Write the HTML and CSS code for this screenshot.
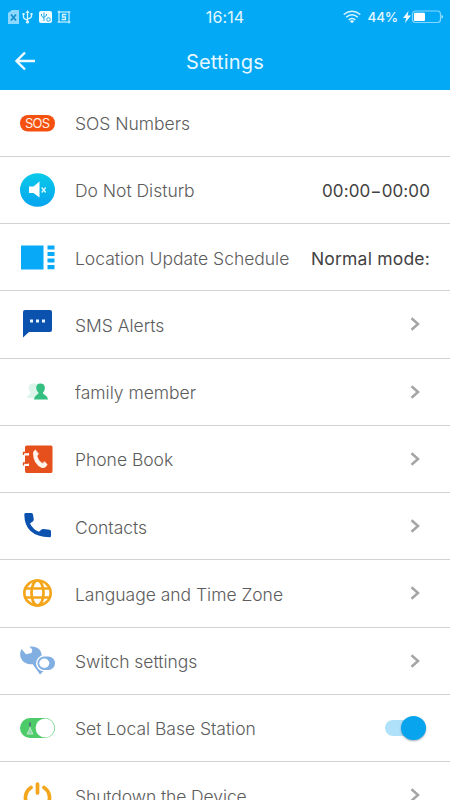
FILE: index.html
```html
<!DOCTYPE html>
<html lang="en">
<head>
<meta charset="utf-8">
<title>Settings</title>
<link rel="stylesheet" href="styles.css">
</head>
<body>
<header class="top">
  <div class="status">
    <svg class="status-left" width="64" height="16" viewBox="0 0 64 16">
      <path d="M0 4l4-3h7v14H0z" fill="#8cd8ff"/><path d="M3 5.500l5 6M8 5.500l-5 6" stroke="#168fce" stroke-width="1.800"/>
      <g stroke="#d8f5ff" fill="none" stroke-width="1.300"><path d="M19.500 3v10M15.500 5v3q0 2 4 3M23.500 5v2q0 2-4 3"/></g>
      <path d="M19.500 1l2 3h-4zM14.500 4h2v2h-2zM22.500 4h2v2h-2z" fill="#d8f5ff"/><circle cx="19.500" cy="13" r="1.600" fill="#d8f5ff"/>
      <rect x="31" y="2" width="13" height="12" rx="2" fill="#effcff"/>
      <path d="M36 3.500v8.500M33.500 5v2l2.500 2M38.500 5v1.500L36 8" stroke="#20a9e7" fill="none"/><circle cx="40.500" cy="10.500" r="1.800" stroke="#20a9e7" fill="none"/>
      <rect x="51" y="3" width="10" height="10" fill="none" stroke="#c9f2ff" stroke-width="1.200"/><path d="M49.500 3h2M51 1.500v2M60.500 13h2M61 12.500v2M49.500 13h2M60.500 3h2" stroke="#c9f2ff"/>
      <path d="M58.500 5.500h-4V8h3v2.500h-4" fill="none" stroke="#d8f5ff" stroke-width="1.300"/>
    </svg>
    <span class="time">16:14</span>
    <div class="status-right">
      <svg width="18" height="14" viewBox="0 0 18 14"><g fill="none" stroke="#dcf6ff" stroke-width="1.500"><path d="M.7 4.500q8.300-6.600 16.600 0M3.200 7.200q5.800-4.700 11.600 0M5.700 9.800q3.300-2.700 6.600 0"/></g><path d="M6.700 11q2.300-1.600 4.600 0L9 13.200z" fill="#dcf6ff"/></svg>
      <span class="percent">44%</span>
      <svg class="battery" width="40" height="14" viewBox="0 0 40 14"><path d="M5.500 1L0 8h3.200L2 13l6-7.500H4.700z" fill="#eefbff"/><rect x="9.500" y="1" width="28" height="11.500" rx="3" fill="none" stroke="#85d7ff" stroke-width="1.200"/><rect x="11" y="2.700" width="11" height="8.200" rx="1" fill="#fff"/><path d="M38.500 5q1.500 0 1.500 1.800t-1.500 1.800z" fill="#b6e8ff"/></svg>
    </div>
  </div>
  <div class="bar">
    <svg class="back" width="20" height="20" viewBox="0 0 20 20"><path d="M10 1.500L1.500 10l8.500 8.500M1.500 10H20" fill="none" stroke="#effbff" stroke-width="2.400"/></svg>
    <h1 class="title">Settings</h1>
  </div>
</header>
<main class="list">
  <div class="row">
    <svg class="icon" viewBox="0 0 36 36"><rect x="0" y="9" width="35" height="16.500" rx="8" fill="#f4500f"/><text class="sos" x="17.500" y="21.800" textLength="25" text-anchor="middle">SOS</text></svg>
    <span class="label">SOS Numbers</span>
  </div>
  <div class="row">
    <svg class="icon" viewBox="0 0 36 36"><defs><linearGradient id="sky" x1="0" y1="0" x2="0" y2="1"><stop stop-color="#08cae9"/><stop offset="1" stop-color="#07a4ef"/></linearGradient></defs><ellipse cx="17.500" cy="17" rx="17.500" ry="16.800" fill="url(#sky)"/><path d="M9 13.500h4.500l6-5v16l-6-4.500H9z" fill="#fff"/><path d="M21.700 14.500l4 5M25.700 14.500l-4 5" stroke="#d8f7ff" stroke-width="1.400"/></svg>
    <span class="label">Do Not Disturb</span><span class="value hours">00:00−00:00</span>
  </div>
  <div class="row">
    <svg class="icon" viewBox="0 0 36 36"><path d="M1 5.500h22.500v24H1zM27.500 5.500h7v4h-7zM27.500 12h7v4h-7zM27.500 18.500h7v4h-7zM27.500 25h7v4.300h-7z" fill="#08aaf7"/></svg>
    <span class="label">Location Update Schedule</span><span class="value mode">Normal mode:</span>
  </div>
  <div class="row">
    <svg class="icon" viewBox="0 0 36 36"><path d="M5 3h25q2 0 2 2v18q0 2-2 2H9l-6 5.500V5q0-2 2-2z" fill="#0b52ae"/><path d="M10 12.500h3v3h-3zM16 12.500h3v3h-3zM22 12.500h3v3h-3z" fill="#e8f4ff"/></svg>
    <span class="label">SMS Alerts</span><svg class="chevron" viewBox="0 0 10 16"><path d="M1.500 2.300L8 8l-6.500 5.700"/></svg>
  </div>
  <div class="row">
    <svg class="icon" viewBox="0 0 36 36"><path d="M13 8.500c-6 0-4.500 7-2.500 8.500 0 3-3 2-3.500 6h14V9z" fill="#dcf4e9"/><path d="M20.500 8.500c5.500 0 5.300 6.500 2.500 9-.3 3 4 1.500 5 7H14c1-5.500 4.500-4 4.500-7-3-2.500-3.500-9 2-9z" fill="#34bf80"/></svg>
    <span class="label">family member</span><svg class="chevron" viewBox="0 0 10 16"><path d="M1.500 2.300L8 8l-6.500 5.700"/></svg>
  </div>
  <div class="row">
    <svg class="icon" viewBox="0 0 36 36"><path d="M7 3.500h24q1.500 0 1.500 1.500v24q0 2-1.500 2H6.500q-1.500 0-1.500-2V5q0-1.500 2-1.500z" fill="#e5501c"/><path d="M4 11h5v2.500H4zM4 21.500h5V24H4z" fill="#fff"/><path d="M3.500 13v-2.500H8M3.500 23.500V21H8" fill="none" stroke="#e5501c" stroke-width="1.300"/><path d="M13 11q0-2 2.500-3.500l3.500 4-1.700 2.500q1 4.500 4.700 7l2.500-1.800 3 3.300q-2 4-5.500 3.500Q13 22 13 11z" fill="#fff5ed"/><path d="M16 8.500l3 4M22.500 21.500l3-2.500" stroke="#e99877" stroke-width=".8"/></svg>
    <span class="label">Phone Book</span><svg class="chevron" viewBox="0 0 10 16"><path d="M1.500 2.300L8 8l-6.500 5.700"/></svg>
  </div>
  <div class="row">
    <svg class="icon" viewBox="0 0 36 36"><path d="M5.500 4h6q1.300 0 1.500 1.500l.8 5q0 1-.8 1.700L10 14.500q3 6 9 8.300l2.500-2.300q.8-.6 2-.5l6 .7q1.500.3 1.500 1.800V27q0 1.300-1.500 1.300Q4.500 27.500 4.300 5.500 4.300 4 5.500 4z" fill="#0b52ae"/></svg>
    <span class="label">Contacts</span><svg class="chevron" viewBox="0 0 10 16"><path d="M1.500 2.300L8 8l-6.500 5.700"/></svg>
  </div>
  <div class="row">
    <svg class="icon" viewBox="0 0 36 36"><g fill="none" stroke="#f3a51b" stroke-width="2.700"><ellipse cx="17.500" cy="17" rx="13.200" ry="12.500"/><ellipse cx="17.500" cy="17" rx="6" ry="12.500"/><path d="M6 12.500h23M6 21.500h23"/></g></svg>
    <span class="label">Language and Time Zone</span><svg class="chevron" viewBox="0 0 10 16"><path d="M1.500 2.300L8 8l-6.500 5.700"/></svg>
  </div>
  <div class="row">
    <svg class="icon" viewBox="0 0 36 36"><path d="M9.300 2.500Q18 2 20.800 7.500q1.500 3 .2 6l6.500 8-4 5.500-3.500 3.500-7.500-10.500q-6 1-10-3.200Q-1.700 11 1.500 5L6 10.300l5.500-1.300.8-3.500z" fill="#82afe2"/><rect x="16" y="11.300" width="20.500" height="16" rx="8" fill="#fff"/><rect x="17.500" y="12.500" width="17.500" height="13.500" rx="6.700" fill="#82afe2"/><ellipse cx="24.300" cy="19.300" rx="5" ry="4.700" fill="#fff"/></svg>
    <span class="label">Switch settings</span><svg class="chevron" viewBox="0 0 10 16"><path d="M1.500 2.300L8 8l-6.500 5.700"/></svg>
  </div>
  <div class="row">
    <svg class="icon" viewBox="0 0 36 36"><rect x="0" y="7" width="35" height="20" rx="10" fill="#4ccb68"/><circle cx="25" cy="17" r="9.400" fill="#fff"/><path d="M10 12v5l-3 6h6l-3-6" fill="#91d7ab" stroke="#b9e8c8"/><path d="M10 11.500v4" stroke="#415b70" stroke-width="1.500"/></svg>
    <span class="label">Set Local Base Station</span><span class="switch"><span class="knob"></span></span>
  </div>
  <div class="row">
    <svg class="icon" viewBox="0 0 36 36"><path d="M11 9.500a12 12 0 1 0 13 0M17.500 6v9" fill="none" stroke="#f3a51b" stroke-width="3.700" stroke-linecap="round"/></svg>
    <span class="label last">Shutdown the Device</span><svg class="chevron" viewBox="0 0 10 16"><path d="M1.500 2.300L8 8l-6.500 5.700"/></svg>
  </div>
</main>
</body>
</html>
```
FILE: styles.css
```css
* { box-sizing: border-box; }
html, body { height: 100%; }
body {
  margin: 0;
  overflow: hidden;
  background: #fff;
  font-family: Inter, "Liberation Sans", sans-serif;
}
.top { height: 89.500px; background: #04a9f6; color: #e6f8ff; }
.status {
  display: grid;
  grid-template-columns: 1fr auto 1fr;
  align-items: center;
  height: 33px;
  padding: 0 7px 0 8px;
}
.time { font-size: 16px; letter-spacing: .1px; line-height: 20px; margin: 1px 1px 0 0; }
.status-right { display: flex; align-items: center; justify-content: flex-end; }
.percent { margin: 1px 5px 0 6px; font-size: 13.500px; font-weight: 500; letter-spacing: -.2px; }
.bar {
  display: grid;
  grid-template-columns: 1fr auto 1fr;
  align-items: center;
  height: 56px;
  padding: 0 15px;
}
.title { margin: 2px 0 0; font-size: 20px; font-weight: 400; letter-spacing: .2px; }
.row {
  display: flex;
  align-items: center;
  height: 67.250px;
  padding: 0 20px;
  border-bottom: 1.500px solid #d2d2d2;
}
.icon { flex: none; width: 36px; height: 36px; margin: 2px 19px 0 0; overflow: visible; }
.sos { fill: #fff0e3; font-size: 13px; font-weight: 400; }
.label {
  color: #5c5c5c;
  font-size: 17.500px;
  font-weight: 300;
  letter-spacing: -.02px;
  white-space: nowrap;
  padding-top: 2px;
}
.last { letter-spacing: -.1px; }
.value {
  margin-left: auto;
  color: #424242;
  font-size: 17px;
  letter-spacing: .1px;
  white-space: nowrap;
  padding-top: 2px;
}
.mode { font-size: 17.500px; letter-spacing: .2px; }
.chevron {
  width: 10px;
  height: 16px;
  margin: 0 10px 0 auto;
  fill: none;
  stroke: #a5a5a5;
  stroke-width: 2.500;
}
.switch {
  display: flex;
  align-items: center;
  justify-content: flex-end;
  width: 41px;
  height: 16px;
  margin: 0 4px 0 auto;
  border-radius: 8px;
  background: #b0e1fa;
}
.knob {
  flex: none;
  width: 25px;
  height: 24px;
  border-radius: 50%;
  background: #08a4ee;
  box-shadow: 0 1px 2px rgba(0, 40, 70, .4);
}
```
